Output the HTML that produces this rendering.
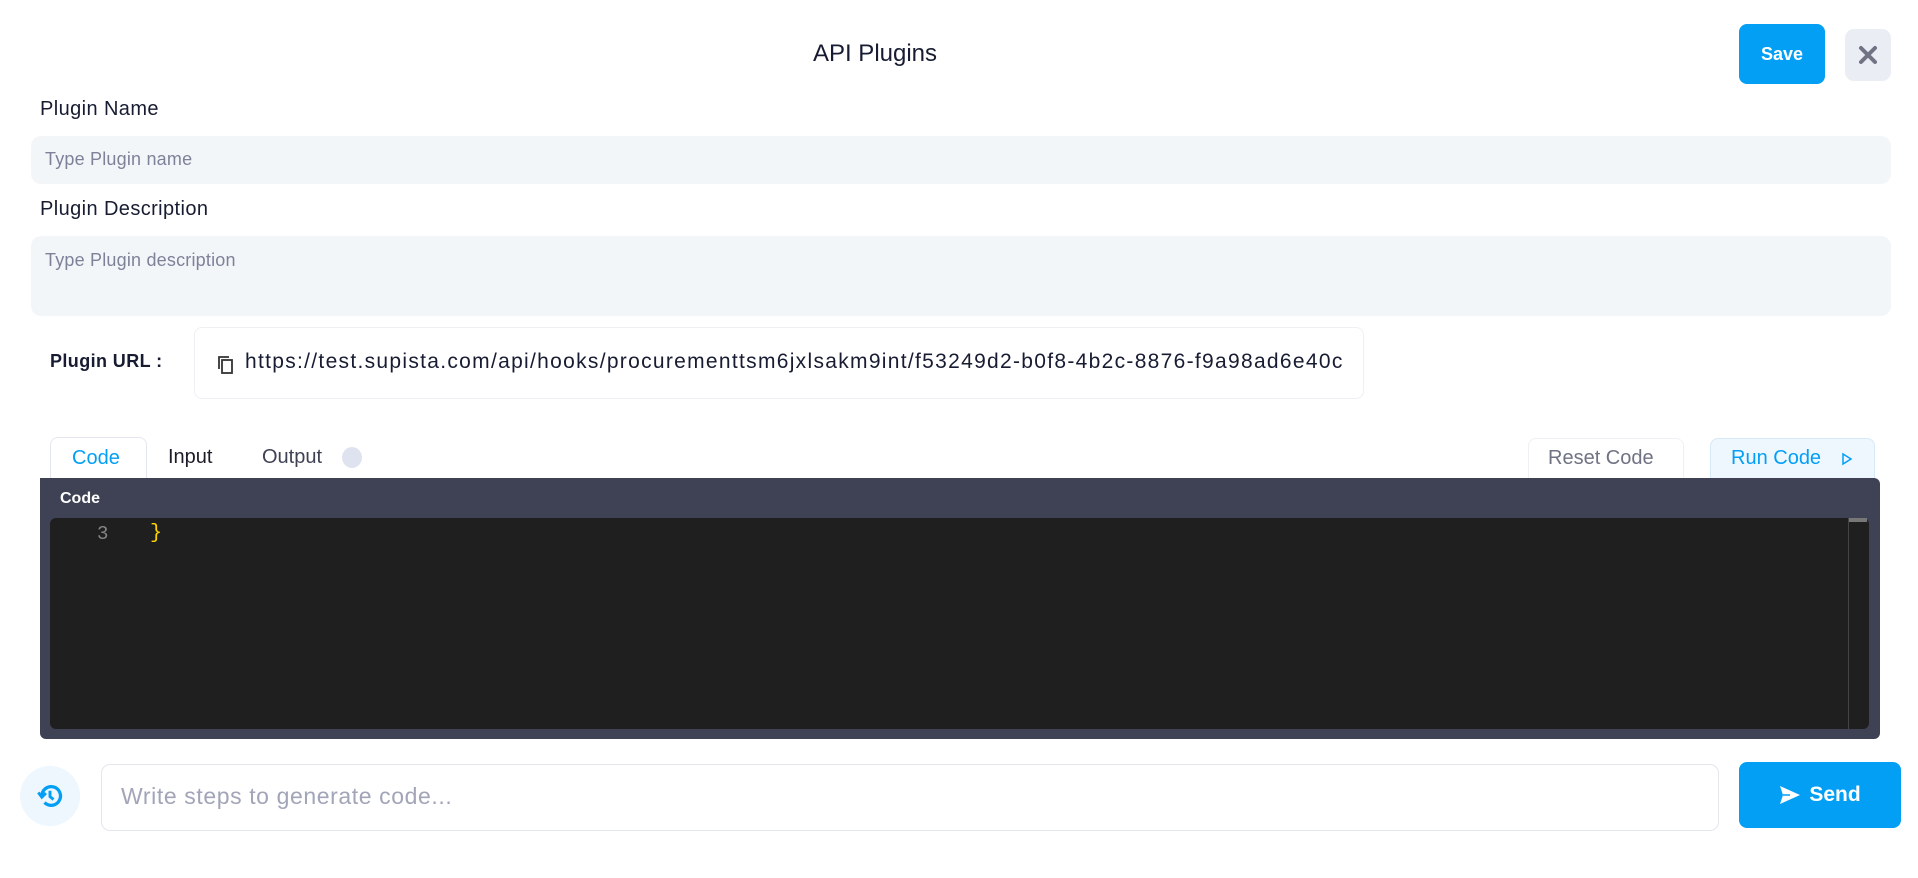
<!DOCTYPE html>
<html><head><meta charset="utf-8"><style>
*{box-sizing:border-box;margin:0;padding:0}
body{width:1918px;height:878px;background:#fff;font-family:"Liberation Sans",sans-serif;position:relative;overflow:hidden;color:#1c1c28}
.a{position:absolute}
.title{left:780px;width:190px;top:40px;text-align:center;font-size:24px;color:#181c32}
.save{left:1739px;top:24px;width:86px;height:60px;background:#039ff5;border-radius:8px;color:#fff;font-weight:bold;font-size:18px;display:flex;align-items:center;justify-content:center}
.close{left:1845px;top:29px;width:46px;height:52px;background:#ebedf5;border-radius:9px;display:flex;align-items:center;justify-content:center}
.lbl{font-size:20px;color:#181c32;letter-spacing:0.4px}
.inp{background:#f3f6f9;border-radius:10px;left:31px;width:1860px}
.ph{font-size:18px;color:#7e8299;letter-spacing:0.2px}
.url{left:194px;top:327px;width:1170px;height:72px;border:1px solid #eef0f4;border-radius:8px}
.tab{font-size:20px}
</style></head><body>
<div class="a title">API Plugins</div>
<div class="a save">Save</div>
<div class="a close"><svg width="20" height="20" viewBox="0 0 20 20"><path d="M3 3L17 17M17 3L3 17" stroke="#6f7384" stroke-width="4" stroke-linecap="round"/></svg></div>

<div class="a lbl" style="left:40px;top:98px">Plugin Name</div>
<div class="a inp" style="top:136px;height:48px"></div>
<div class="a ph" style="left:45px;top:149px">Type Plugin name</div>

<div class="a lbl" style="left:40px;top:198px">Plugin Description</div>
<div class="a inp" style="top:236px;height:80px"></div>
<div class="a ph" style="left:45px;top:250px">Type Plugin description</div>

<div class="a lbl" style="left:50px;top:351px;font-weight:bold;font-size:18px">Plugin URL :</div>
<div class="a url"></div>
<svg class="a" style="left:217px;top:355px" width="18" height="20" viewBox="0 0 18 20"><rect x="5" y="5" width="10" height="13" fill="none" stroke="#333" stroke-width="1.8"/><path d="M2 14V2H12" fill="none" stroke="#333" stroke-width="1.8"/></svg>
<div class="a" style="left:245px;top:350px;font-size:21px;letter-spacing:1.3px;color:#181c32;white-space:nowrap">https://test.supista.com/api/hooks/procurementtsm6jxlsakm9int/f53249d2-b0f8-4b2c-8876-f9a98ad6e40c</div>

<div class="a" style="left:50px;top:437px;width:97px;height:44px;border:1px solid #e4e6ef;border-bottom:none;border-radius:8px 8px 0 0"></div>
<div class="a tab" style="left:72px;top:447px;color:#039ff5">Code</div>
<div class="a tab" style="left:168px;top:446px">Input</div>
<div class="a tab" style="left:262px;top:446px;color:#3f4254">Output</div>
<div class="a" style="left:342px;top:447px;width:20px;height:21px;border-radius:50%;background:#dfe2ef"></div>

<div class="a" style="left:1528px;top:438px;width:156px;height:42px;border:1px solid #eef0f4;border-bottom:none;border-radius:8px 8px 0 0"></div>
<div class="a tab" style="left:1548px;top:447px;color:#6f7384">Reset Code</div>
<div class="a" style="left:1710px;top:438px;width:165px;height:42px;border:1px solid #d6e9f8;border-bottom:none;border-radius:8px 8px 0 0;background:#eef7fe"></div>
<div class="a tab" style="left:1731px;top:447px;color:#039ff5">Run Code</div>
<svg class="a" style="left:1841px;top:452px" width="12" height="14" viewBox="0 0 12 14"><path d="M2 2L10 7L2 12Z" fill="none" stroke="#039ff5" stroke-width="1.5"/></svg>

<div class="a" style="left:40px;top:478px;width:1840px;height:261px;background:#3f4254;border-radius:0 6px 6px 6px"></div>
<div class="a" style="left:60px;top:490px;color:#fff;font-weight:bold;font-size:16px">Code</div>
<div class="a" style="left:50px;top:518px;width:1819px;height:211px;background:#1f1f1f;border-radius:6px"></div>
<div class="a" style="left:1848px;top:518px;width:1px;height:211px;background:#444"></div>
<div class="a" style="left:1849px;top:518px;width:18px;height:4px;background:#777"></div>
<div class="a" style="left:97px;top:523px;font-family:'Liberation Mono',monospace;font-size:19px;color:#858585">3</div>
<div class="a" style="left:150px;top:522px;font-family:'Liberation Mono',monospace;font-size:20px;color:#ffd700">}</div>

<div class="a" style="left:20px;top:766px;width:60px;height:60px;border-radius:50%;background:#eef7fe"></div>
<svg class="a" style="left:36px;top:782px" width="28" height="28" viewBox="0 0 24 24"><path d="M5 12a8 8 0 1 1 2.3 5.6" fill="none" stroke="#039ff5" stroke-width="2.8"/><path d="M2 9L5 13L8.5 9.5" fill="none" stroke="#039ff5" stroke-width="2.5"/><path d="M12 7.5V12.5L15 15" fill="none" stroke="#039ff5" stroke-width="2.5"/></svg>
<div class="a" style="left:101px;top:764px;width:1618px;height:67px;border:1px solid #e4e6ef;border-radius:9px"></div>
<div class="a" style="left:121px;top:783px;font-size:23px;letter-spacing:0.6px;color:#a1a5b7">Write steps to generate code...</div>
<div class="a" style="left:1739px;top:762px;width:162px;height:66px;background:#039ff5;border-radius:8px;color:#fff;font-weight:bold;font-size:21px;display:flex;align-items:center;justify-content:center;gap:8px"><svg width="22" height="20" viewBox="0 0 22 20"><path d="M1 1L21 10L1 19L4 10Z" fill="#fff"/><path d="M4 10H11" stroke="#039ff5" stroke-width="1.5"/></svg>Send</div>
</body></html>
